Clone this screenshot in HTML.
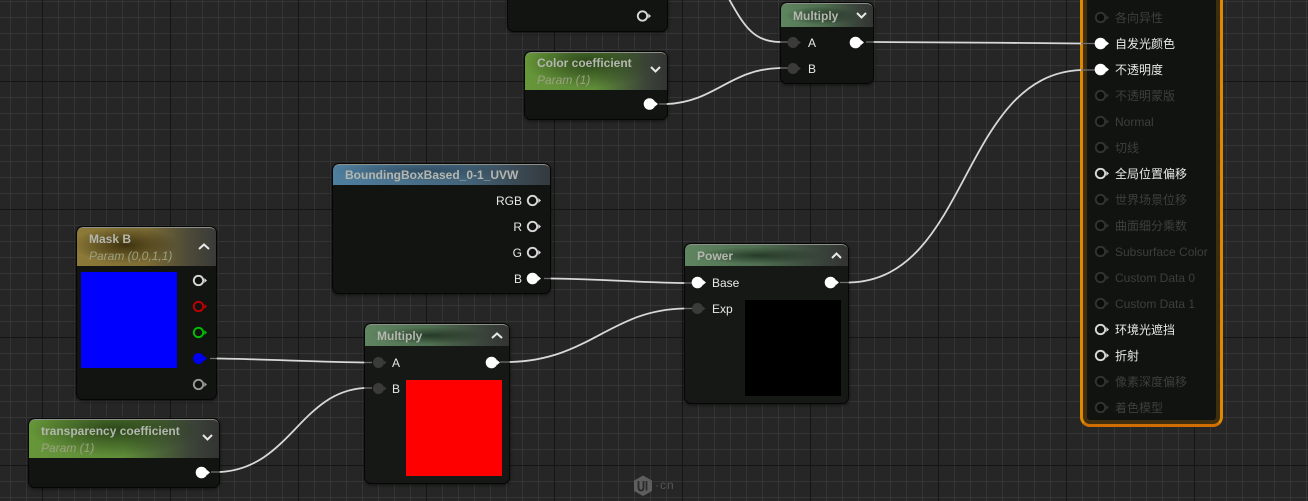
<!DOCTYPE html>
<html><head><meta charset="utf-8">
<style>
html,body{margin:0;padding:0}
#c{position:relative;width:1308px;height:501px;overflow:hidden;background-color:#262626;
background-image:
linear-gradient(90deg,#151515 1px,transparent 1px),
linear-gradient(0deg,#151515 1px,transparent 1px),
linear-gradient(90deg,#353535 1px,transparent 1px),
linear-gradient(180deg,#353535 1px,transparent 1px);
background-size:128px 128px,128px 128px,16px 16px,16px 16px;
background-position:42px 0,0 82px,10px 0,0 1px;
font-family:"Liberation Sans","Noto Sans CJK SC",sans-serif;font-size:12px;color:#e8e8e8}
.n{position:absolute;box-sizing:border-box;background:#121412;border:1px solid #060606;border-radius:7px;box-shadow:0 1px 3px rgba(0,0,0,.6);overflow:hidden}
.h{position:absolute;left:0;right:0;top:0;border-radius:6px 6px 0 0;border-top:1px solid #8d9088;box-sizing:border-box}
.g1{background:radial-gradient(ellipse 45% 70% at 45% 25%,rgba(25,45,15,.75),transparent),linear-gradient(90deg,#669639 0%,#5f8c38 50%,#3c4438 85%,#333 100%)}
.g2{background:radial-gradient(ellipse 40% 40% at 45% 50%,rgba(20,35,22,.7),transparent),linear-gradient(90deg,#5f8560 0%,#4f6f50 45%,#3b463c 80%,#333 100%)}
.y{background:radial-gradient(ellipse 38% 48% at 35% 45%,rgba(45,35,5,.8),transparent),linear-gradient(90deg,#8d7a38 0%,#7d6c34 50%,#4d4a38 80%,#3a3a38 100%)}
.b{background:radial-gradient(ellipse 40% 50% at 40% 30%,rgba(15,30,45,.4),transparent),linear-gradient(90deg,#4f7f9f 0%,#44657c 60%,#34393d 100%)}
.t{position:absolute;font-weight:bold;font-size:12px;color:#b4b7af;white-space:nowrap;line-height:14px}
.s{position:absolute;font-style:italic;font-size:12px;color:#9ba083;white-space:nowrap;line-height:14px}
.l{position:absolute;white-space:nowrap;line-height:14px;color:#e8e8e8}
.d{color:#3e3f3d}
.r{position:absolute;width:96px;height:96px}
svg{position:absolute;left:0;top:0}
#res{position:absolute;left:1080px;top:-20px;width:143px;height:447px;box-sizing:border-box;border:3px solid #de8a00;border-bottom-color:#d06f00;border-radius:0 0 10px 10px;background:#111311;box-shadow:inset 0 0 0 4px #3f2f0f}
</style></head><body>
<div id="c">

<!-- top-left partial node -->
<div class="n" style="left:507px;top:-20px;width:161px;height:52px"></div>

<!-- Color coefficient -->
<div class="n" style="left:524px;top:51px;width:144px;height:69px">
<div class="h g1" style="height:38px"></div></div>
<div class="t" style="left:537px;top:56px">Color coefficient</div>
<div class="s" style="left:537px;top:73px">Param (1)</div>

<!-- Multiply top -->
<div class="n" style="left:780px;top:2px;width:94px;height:82px">
<div class="h g2" style="height:24px"></div></div>
<div class="t" style="left:793px;top:9px">Multiply</div>
<div class="l" style="left:808px;top:36px">A</div>
<div class="l" style="left:808px;top:62px">B</div>

<!-- BoundingBox -->
<div class="n" style="left:332px;top:163px;width:219px;height:131px">
<div class="h b" style="height:21px"></div></div>
<div class="t" style="left:345px;top:168px">BoundingBoxBased_0-1_UVW</div>
<div class="l" style="right:786px;top:194px">RGB</div>
<div class="l" style="right:786px;top:220px">R</div>
<div class="l" style="right:786px;top:246px">G</div>
<div class="l" style="right:786px;top:272px">B</div>

<!-- Mask B -->
<div class="n" style="left:76px;top:226px;width:141px;height:174px">
<div class="h y" style="height:39px"></div></div>
<div class="t" style="left:89px;top:232px">Mask B</div>
<div class="s" style="left:89px;top:249px">Param (0,0,1,1)</div>
<div class="r" style="left:81px;top:272px;background:#0000ff"></div>

<!-- transparency -->
<div class="n" style="left:28px;top:418px;width:192px;height:70px">
<div class="h g1" style="height:39px"></div></div>
<div class="t" style="left:41px;top:424px">transparency coefficient</div>
<div class="s" style="left:41px;top:441px">Param (1)</div>

<!-- Multiply lower -->
<div class="n" style="left:364px;top:323px;width:146px;height:161px;background:#161816">
<div class="h g2" style="height:22px"></div></div>
<div class="t" style="left:377px;top:329px">Multiply</div>
<div class="l" style="left:392px;top:356px">A</div>
<div class="l" style="left:392px;top:382px">B</div>
<div class="r" style="left:406px;top:380px;background:#ff0000"></div>

<!-- Power -->
<div class="n" style="left:684px;top:243px;width:165px;height:161px;background:#161816">
<div class="h g2" style="height:22px"></div></div>
<div class="t" style="left:697px;top:249px">Power</div>
<div class="l" style="left:712px;top:276px">Base</div>
<div class="l" style="left:712px;top:302px">Exp</div>
<div class="r" style="left:745px;top:300px;background:#000"></div>

<!-- Result node -->
<div id="res"></div>
<div class="l d" style="left:1115px;top:11px">各向异性</div>
<div class="l" style="left:1115px;top:37px">自发光颜色</div>
<div class="l" style="left:1115px;top:63px">不透明度</div>
<div class="l d" style="left:1115px;top:89px">不透明蒙版</div>
<div class="l d" style="left:1115px;top:115px">Normal</div>
<div class="l d" style="left:1115px;top:141px">切线</div>
<div class="l" style="left:1115px;top:167px">全局位置偏移</div>
<div class="l d" style="left:1115px;top:193px">世界场景位移</div>
<div class="l d" style="left:1115px;top:219px">曲面细分乘数</div>
<div class="l d" style="left:1115px;top:245px">Subsurface Color</div>
<div class="l d" style="left:1115px;top:271px">Custom Data 0</div>
<div class="l d" style="left:1115px;top:297px">Custom Data 1</div>
<div class="l" style="left:1115px;top:323px">环境光遮挡</div>
<div class="l" style="left:1115px;top:349px">折射</div>
<div class="l d" style="left:1115px;top:375px">像素深度偏移</div>
<div class="l d" style="left:1115px;top:401px">着色模型</div>

<svg width="1308" height="501" viewBox="0 0 1308 501">
<defs>
<g id="pf"><circle r="5.8" fill="#fff"/><path d="M5.5-2.500L8.500 0L5.500 2.500Z" fill="#fff"/></g>
<g id="ph"><circle r="4.700" fill="#111" stroke="#d8d8d8" stroke-width="1.900"/><path d="M5.800-2.500L8.500 0L5.800 2.500Z" fill="#d8d8d8"/></g>
<g id="pg"><circle r="4.700" fill="#111" stroke="#9a9a9a" stroke-width="1.900"/><path d="M5.800-2.500L8.500 0L5.800 2.500Z" fill="#9a9a9a"/></g>
<g id="pd"><circle r="5.500" fill="#3b3c3a"/><path d="M5.500-2L8 0L5.500 2Z" fill="#3b3c3a"/></g>
<g id="pr"><circle r="4.700" fill="#0a0b0a" stroke="#333" stroke-width="1.900"/><path d="M5.800-2.500L8.500 0L5.800 2.500Z" fill="#333"/></g>
</defs>
<g fill="none" stroke="#d8d8d8" stroke-width="1.800" stroke-linecap="round">
<path d="M729 -1C745 28 755 42 780 42"/>
<path d="M667 104C715 102 730 69 780 68"/>
<path d="M874 42C950 42 1010 43 1081 43.500"/>
<path d="M849 282.500C970 280 960 75 1081 70"/>
<path d="M551 278.500C600 279 650 283 684 283"/>
<path d="M217 358.500C260 359 320 362 364 362.500"/>
<path d="M220 472C290 468 300 392 364 388"/>
<path d="M510 362C590 360 610 310 684 308.500"/>
</g>
<g fill="none" stroke="#6f6f6f" stroke-width="1.200">
<path d="M780 42H788M780 68H788M866 42H874M659 104H667M1081 43.500H1095M1081 70H1095M544 278.500H551M684 283H692M684 308.500H692M840 282.500H849M210 358.500H217M364 362.500H372M364 388H372M500 362H510M211 472H220"/>
</g>
<use href="#ph" x="642.500" y="16"/>
<use href="#pf" x="649.500" y="104"/>
<use href="#pd" x="793" y="42.500"/>
<use href="#pd" x="793" y="68.500"/>
<use href="#pf" x="855.500" y="42.500"/>
<use href="#ph" x="532.500" y="200.500"/>
<use href="#ph" x="532.500" y="226.500"/>
<use href="#ph" x="532.500" y="252.500"/>
<use href="#pf" x="532.500" y="278.500"/>
<use href="#ph" x="198.500" y="280.500"/>
<g><circle cx="198.500" cy="306.500" r="4.700" fill="#111" stroke="#c00000" stroke-width="1.900"/><path d="M204.300 304L207 306.500L204.300 309Z" fill="#c00000"/></g>
<g><circle cx="198.500" cy="332.500" r="4.700" fill="#111" stroke="#00c000" stroke-width="1.900"/><path d="M204.300 330L207 332.500L204.300 335Z" fill="#00c000"/></g>
<g><circle cx="198.500" cy="358.500" r="5.500" fill="#0000f0"/><path d="M204 356L207 358.500L204 361Z" fill="#0000f0"/></g>
<use href="#pg" x="198.500" y="384.500"/>
<use href="#pf" x="201.500" y="472.500"/>
<use href="#pd" x="378.500" y="362.500"/>
<use href="#pd" x="378.500" y="388.500"/>
<use href="#pf" x="491.500" y="362.500"/>
<use href="#pf" x="697.500" y="282.500"/>
<use href="#pd" x="697.500" y="308.500"/>
<use href="#pf" x="830.500" y="282.500"/>
<use href="#pr" x="1100.500" y="17.500"/>
<use href="#pf" x="1100.500" y="43.500"/>
<use href="#pf" x="1100.500" y="69.500"/>
<use href="#pr" x="1100.500" y="95.500"/>
<use href="#pr" x="1100.500" y="121.500"/>
<use href="#pr" x="1100.500" y="147.500"/>
<use href="#ph" x="1100.500" y="173.500"/>
<use href="#pr" x="1100.500" y="199.500"/>
<use href="#pr" x="1100.500" y="225.500"/>
<use href="#pr" x="1100.500" y="251.500"/>
<use href="#pr" x="1100.500" y="277.500"/>
<use href="#pr" x="1100.500" y="303.500"/>
<use href="#ph" x="1100.500" y="329.500"/>
<use href="#ph" x="1100.500" y="355.500"/>
<use href="#pr" x="1100.500" y="381.500"/>
<use href="#pr" x="1100.500" y="407.500"/>
<!-- chevrons -->
<g fill="none" stroke="#e8e8e8" stroke-width="2">
<path d="M651 67L655.500 71.500L660 67"/>
<path d="M857 13L861.500 17.500L866 13"/>
<path d="M199 249L204 244.500L209 249"/>
<path d="M203 435L207.500 439.500L212 435"/>
<path d="M492 338L497 333.500L502 338"/>
<path d="M832 258L836.500 253.500L841 258"/>
</g>
<!-- watermark -->
<path d="M643 475.500L652 480.500V491L643 496L634 491V480.500Z" fill="#5e5e5e"/>
<path d="M638.500 481V487.500Q638.500 490.500 641 490.500Q643.500 490.500 643.500 487.500V481M646.500 481V490.500" fill="none" stroke="#2b2b2b" stroke-width="1.800"/>
<text x="655" y="489" font-family="Liberation Sans" font-size="12" fill="#555" letter-spacing="1">·cn</text>
</svg>
</div>
</body></html>
